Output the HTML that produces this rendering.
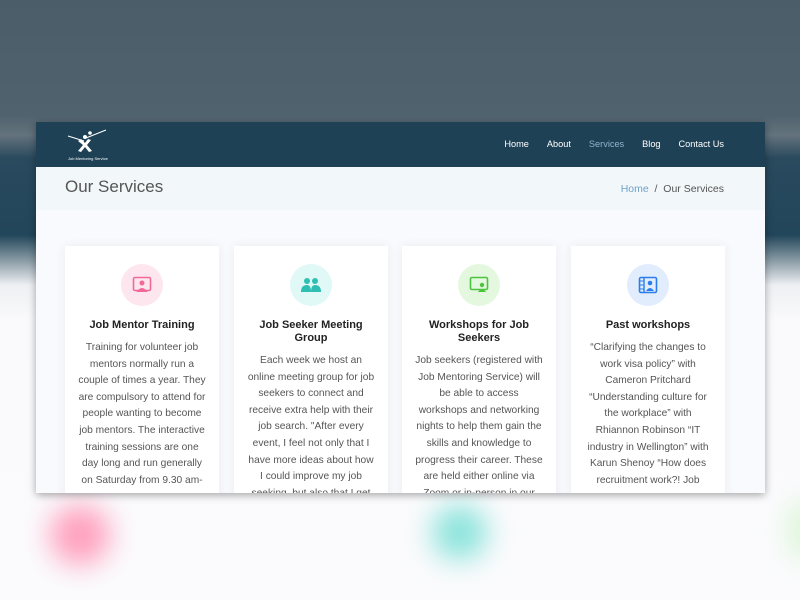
<!DOCTYPE html>
<html><head><meta charset="utf-8"><style>
*{margin:0;padding:0;box-sizing:border-box}
body{width:800px;height:600px;overflow:hidden;position:relative;font-family:"Liberation Sans",sans-serif;
background:linear-gradient(to bottom,#4b5d69 0px,#4f626e 115px,#64737d 135px,#2a4a5e 158px,#22465a 235px,#8fa0aa 262px,#eef0f3 285px,#fafafc 320px,#fbfbfd 600px);}
.blob{position:absolute;border-radius:50%;filter:blur(14px)}
.frame{position:absolute;left:36px;top:122px;width:729px;height:371px;background:#f9fafd;overflow:hidden;box-shadow:0 2px 8px rgba(0,0,0,.35)}
.nav{height:45px;background:#1e4156;position:relative}
.nav ul{position:absolute;right:41px;top:17px;list-style:none;display:flex;gap:0}
.nav li{font-size:9.2px;color:#fff;margin-left:18px}
.nav li.act{color:#8fb4cc}
.bc{height:43px;background:#f2f7fa;position:relative}
.bc h1{position:absolute;left:29px;top:10px;font-weight:normal;font-size:17px;color:#555}
.bc .r{position:absolute;right:41px;top:16px;font-size:10.5px;color:#555}
.bc .r span{color:#6fa3c8}
.card{position:absolute;top:124px;width:154px;height:260px;background:#fff;box-shadow:0 0 10px rgba(40,50,90,.07);text-align:center}
.ic{width:42px;height:42px;border-radius:50%;margin:18px auto 0;display:flex;align-items:center;justify-content:center}
.card h3{font-size:11px;color:#222;margin:13px 12px 0;line-height:13px}
.card p{font-size:10.2px;color:#555;line-height:16.6px;margin:8px 12px 0}
</style></head><body>
<div class="blob" style="left:50px;top:505px;width:60px;height:60px;background:#ff9fbd"></div>
<div class="blob" style="left:432px;top:505px;width:55px;height:55px;background:#8ae3db"></div>
<div class="blob" style="left:790px;top:500px;width:30px;height:60px;background:#d6f5cf"></div>
<div class="frame">
 <div class="nav">
  <svg style="position:absolute;left:30px;top:6px" width="44" height="34" viewBox="0 0 44 34">
   <path d="M2 8 L18 13" stroke="#fff" stroke-width="1"/><path d="M20 10 L40 2" stroke="#fff" stroke-width="1"/>
   <circle cx="19" cy="9" r="2" fill="#fff"/><circle cx="24" cy="5" r="1.8" fill="#fff"/>
   <path d="M12 13 L17 17 L12 23 L15 24 L19 19 L23 24 L26 23 L21 17 L25 12 L22 11 L19 15 L15 11Z" fill="#fff"/>
   <text x="2" y="32" font-size="4" fill="#fff" font-family="Liberation Sans">Job Mentoring Service</text>
  </svg>
  <ul><li>Home</li><li>About</li><li class="act">Services</li><li>Blog</li><li>Contact Us</li></ul>
 </div>
 <div class="bc"><h1>Our Services</h1><div class="r"><span>Home</span> &nbsp;/&nbsp; Our Services</div></div>
 <div class="card" style="left:29px">
  <div class="ic" style="background:#fde6ee"><svg width="20" height="18" viewBox="0 0 20 18"><rect x="1.5" y="1.5" width="17" height="13" rx="1.5" fill="none" stroke="#f2689a" stroke-width="1.6"/><circle cx="10" cy="7" r="2.5" fill="#f2689a"/><path d="M4.5 16 Q10 8 15.5 16Z" fill="#f2689a"/></svg></div>
  <h3>Job Mentor Training</h3>
  <p>Training for volunteer job mentors normally run a couple of times a year. They are compulsory to attend for people wanting to become job mentors. The interactive training sessions are one day long and run generally on Saturday from 9.30 am-</p>
 </div>
 <div class="card" style="left:198px">
  <div class="ic" style="background:#e0f8f6"><svg width="22" height="16" viewBox="0 0 22 16"><circle cx="7" cy="4" r="3" fill="#2ebfb3"/><circle cx="15" cy="4" r="3" fill="#2ebfb3"/><path d="M1 15 Q1 8 7 8 Q11 8 11 15Z M11 15 Q11 8 15 8 Q21 8 21 15Z" fill="#2ebfb3"/></svg></div>
  <h3>Job Seeker Meeting Group</h3>
  <p>Each week we host an online meeting group for job seekers to connect and receive extra help with their job search. "After every event, I feel not only that I have more ideas about how I could improve my job seeking, but also that I get</p>
 </div>
 <div class="card" style="left:366px">
  <div class="ic" style="background:#e4f8e0"><svg width="20" height="18" viewBox="0 0 20 18"><rect x="1.5" y="1.5" width="17" height="12" rx="1.5" fill="none" stroke="#4cc43c" stroke-width="1.6"/><circle cx="13" cy="9" r="2.2" fill="#4cc43c"/><path d="M9 16 Q13 10 17 16Z" fill="#4cc43c"/></svg></div>
  <h3>Workshops for Job Seekers</h3>
  <p>Job seekers (registered with Job Mentoring Service) will be able to access workshops and networking nights to help them gain the skills and knowledge to progress their career. These are held either online via Zoom or in-person in our training room</p>
 </div>
 <div class="card" style="left:535px">
  <div class="ic" style="background:#e1edfd"><svg width="20" height="18" viewBox="0 0 20 18"><rect x="1.5" y="1.5" width="17" height="15" rx="1.5" fill="none" stroke="#2b7de9" stroke-width="1.6"/><path d="M6 2v14" stroke="#2b7de9" stroke-width="1.4"/><path d="M2 5h4M2 9h4M2 13h4" stroke="#2b7de9" stroke-width="1"/><circle cx="12" cy="7" r="2.3" fill="#2b7de9"/><path d="M8 15 Q12 9 16 15Z" fill="#2b7de9"/></svg></div>
  <h3>Past workshops</h3>
  <p>“Clarifying the changes to work visa policy” with Cameron Pritchard “Understanding culture for the workplace” with Rhiannon Robinson “IT industry in Wellington” with Karun Shenoy “How does recruitment work?! Job</p>
 </div>
</div>
</body></html>
